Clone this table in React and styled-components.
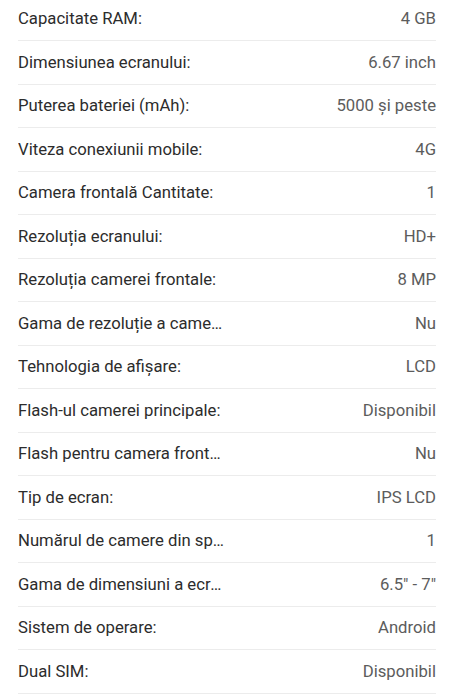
import React from "react";
import styled, { createGlobalStyle } from "styled-components";

const Global = createGlobalStyle`
  html, body { margin: 0; padding: 0; background: #fff; }
  body { font-family: Roboto, "Noto Sans", Arial, sans-serif; overflow: hidden; }
`;

const List = styled.div`
  margin-top: -2.5px;
  padding: 0 19px 0 18px;
`;

const Row = styled.div`
  display: flex;
  align-items: center;
  justify-content: space-between;
  height: 43.5px;
  box-sizing: border-box;
  border-bottom: 1px solid #ececec;
  font-size: 16.7px;
`;

const Label = styled.span`
  flex: 0 0 208px;
  color: #2c2c2c;
  white-space: nowrap;
  overflow: hidden;
  text-overflow: ellipsis;
`;

const Value = styled.span`
  flex: 1;
  text-align: right;
  color: #5c5c5c;
  white-space: nowrap;
`;

const rows = [
  ["Capacitate RAM:", "4 GB"],
  ["Dimensiunea ecranului:", "6.67 inch"],
  ["Puterea bateriei (mAh):", "5000 și peste"],
  ["Viteza conexiunii mobile:", "4G"],
  ["Camera frontală Cantitate:", "1"],
  ["Rezoluția ecranului:", "HD+"],
  ["Rezoluția camerei frontale:", "8 MP"],
  ["Gama de rezoluție a camerei principale:", "Nu"],
  ["Tehnologia de afișare:", "LCD"],
  ["Flash-ul camerei principale:", "Disponibil"],
  ["Flash pentru camera frontală:", "Nu"],
  ["Tip de ecran:", "IPS LCD"],
  ["Numărul de camere din spate:", "1"],
  ["Gama de dimensiuni a ecranului:", "6.5\" - 7\""],
  ["Sistem de operare:", "Android"],
  ["Dual SIM:", "Disponibil"],
];

export default function App() {
  return (
    <>
      <Global />
      <List>
        {rows.map(([l, v]) => (
          <Row key={l}>
            <Label>{l}</Label>
            <Value>{v}</Value>
          </Row>
        ))}
      </List>
    </>
  );
}
